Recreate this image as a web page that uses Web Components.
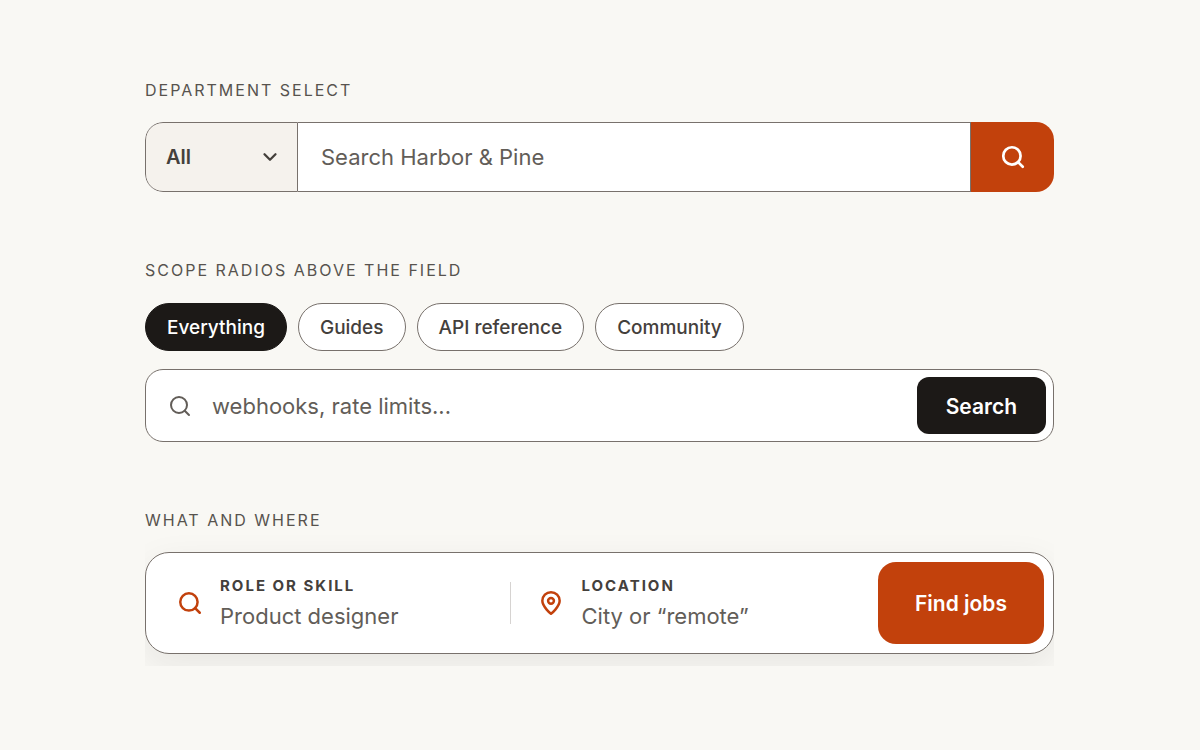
<!DOCTYPE html>
<html lang="en">
<head>
<meta charset="utf-8">
<meta name="viewport" content="width=device-width, initial-scale=1">
<title>Search fields</title>
<style>
  body {
    margin: 0;
    background: #f9f8f4;
    color: #44403c;
    font-family: Inter, "Liberation Sans", sans-serif;
    --line: #78716c;
    --muted: #57534e;
    --placeholder: #625d58;
    --ink: #1c1917;
    --accent: #c2410c;
  }
  main {
    display: grid;
    gap: 54px;
    padding: 78px 146px 78px 145px;
  }
</style>
</head>
<body>
<main>
  <search-section heading="DEPARTMENT SELECT">
    <department-search></department-search>
  </search-section>
  <search-section heading="SCOPE RADIOS ABOVE THE FIELD">
    <scope-search></scope-search>
  </search-section>
  <search-section heading="WHAT AND WHERE">
    <job-search>
      <job-field label="ROLE OR SKILL" placeholder="Product designer"><ui-icon name="search" slot="icon"></ui-icon></job-field>
      <job-field label="LOCATION" placeholder="City or “remote”"><ui-icon name="pin" slot="icon"></ui-icon></job-field>
    </job-search>
  </search-section>
</main>

<script>
  const reset = `
    *, *::before { box-sizing: border-box; }
    input, select, button { font: inherit; color: inherit; margin: 0; }
    input[type="search"], input[type="text"] {
      appearance: none; border: 0; outline: 0; background: none; padding: 0;
      min-width: 0; font-size: 22px; line-height: 28px; color: var(--ink);
    }
    input::placeholder { color: var(--placeholder); opacity: 1; }
    button { border: 0; cursor: pointer; }
  `;

  class BaseElement extends HTMLElement {
    connectedCallback() {
      if (this.shadowRoot) return;
      this.attachShadow({ mode: "open" }).innerHTML =
        `<style>${reset}${this.styles()}</style>${this.markup()}`;
    }
  }

  const icons = {
    search: '<circle cx="11" cy="11" r="8"/><path d="m21 21-4.300-4.300"/>',
    chevron: '<path d="m6 9 6 6 6-6"/>',
    pin: '<path d="M12 22s8-6.500 8-12a8 8 0 0 0-16 0c0 5.500 8 12 8 12z"/><circle cx="12" cy="10" r="2.700"/>'
  };

  customElements.define("ui-icon", class extends BaseElement {
    styles() {
      return `
        :host { display: block; flex: none; width: 26px; height: 26px; }
        svg { display: block; width: 100%; height: 100%; }
      `;
    }
    markup() {
      return `<svg viewBox="0 0 24 24" fill="none" stroke="currentColor" stroke-width="${this.getAttribute("stroke") || "2.3"}"
        stroke-linecap="round" stroke-linejoin="round" aria-hidden="true">${icons[this.getAttribute("name")]}</svg>`;
    }
  });

  customElements.define("search-section", class extends BaseElement {
    styles() {
      return `
        :host { display: block; overflow: hidden; padding-bottom: 12px; }
        h2 { margin: 0 0 20px; font-size: 16px; line-height: 24px; font-weight: 400;
             letter-spacing: 2px; color: var(--muted); }
      `;
    }
    markup() {
      return `<h2>${this.getAttribute("heading")}</h2><slot></slot>`;
    }
  });

  customElements.define("department-search", class extends BaseElement {
    styles() {
      return `
        :host { display: block; }
        form { display: flex; height: 70px; border-radius: 18px; background: #fff; overflow: hidden; }
        .department { display: grid; grid-template-columns: 1fr; align-items: center; width: 153px;
                      background: #f5f2ed; border: 1px solid var(--line); border-radius: 18px 0 0 18px; }
        select, .department ui-icon { grid-area: 1 / 1; }
        select { appearance: none; width: 100%; height: 100%; border: 0; outline: 0; background: none;
                 padding: 0 48px 0 20px; font-size: 20px; font-weight: 600; color: #44403c; }
        .department ui-icon { justify-self: end; width: 22px; height: 22px; margin-right: 16px;
                              pointer-events: none; }
        input[type="search"] { flex: 1; padding: 0 23px; border: 1px solid var(--line); border-left: 0; }
        button { display: grid; place-items: center; width: 83px;
                 background: var(--accent); color: #fff; padding: 0; }
      `;
    }
    markup() {
      return `<form>
        <div class="department">
          <select aria-label="Department"><option>All</option><option>Furniture</option><option>Lighting</option></select>
          <ui-icon name="chevron" stroke="2.5"></ui-icon>
        </div>
        <input type="search" aria-label="Search Harbor &amp; Pine" placeholder="Search Harbor &amp; Pine">
        <button type="button" aria-label="Search"><ui-icon name="search" stroke="2.5"></ui-icon></button>
      </form>`;
    }
  });

  customElements.define("scope-search", class extends BaseElement {
    styles() {
      return `
        :host { display: block; padding-top: 1px; }
        form { display: grid; gap: 18px; }
        fieldset { display: flex; flex-wrap: wrap; gap: 11px; margin: 0; padding: 0; border: 0; }
        label { display: grid; place-items: center; padding: 11px 21px 9px;
                border: 1px solid var(--line); border-radius: 24px; background: #fff;
                font-size: 19px; font-weight: 500; line-height: 26px; cursor: pointer; }
        label input { appearance: none; position: absolute; width: 1px; height: 1px; opacity: 0; }
        label:has(:checked) { background: var(--ink); border-color: var(--ink); color: #fff; }
        .bar { display: flex; align-items: center; gap: 20px; padding: 7px 7px 7px 22px;
               border: 1px solid var(--line); border-radius: 18px; background: #fff; }
        .bar > ui-icon { width: 24px; height: 24px; color: var(--placeholder); }
        .bar input { flex: 1; }
        button { height: 57px; padding: 1px 29px 0; border-radius: 12px; background: var(--ink);
                 color: #fff; font-size: 21px; font-weight: 600; }
      `;
    }
    markup() {
      const scopes = ["Everything", "Guides", "API reference", "Community"];
      return `<form>
        <fieldset aria-label="Scope">${scopes.map((s, i) =>
          `<label><input type="radio" name="scope" ${i ? "" : "checked"}><span>${s}</span></label>`).join("")}</fieldset>
        <div class="bar">
          <ui-icon name="search" stroke="2"></ui-icon>
          <input type="search" aria-label="Search the docs" placeholder="webhooks, rate limits...">
          <button type="button">Search</button>
        </div>
      </form>`;
    }
  });

  customElements.define("job-field", class extends BaseElement {
    styles() {
      return `
        :host { display: flex; align-items: center; gap: 17px; }
        ::slotted(ui-icon) { color: var(--accent); }
        div { display: grid; flex: 1; min-width: 0; padding-top: 2px; }
        label { font-size: 15px; line-height: 24px; font-weight: 700; letter-spacing: 2px; }
        input { width: 100%; height: 36px; }
      `;
    }
    markup() {
      return `<slot name="icon"></slot>
        <div><label for="field">${this.getAttribute("label")}</label>
        <input id="field" type="text" placeholder="${this.getAttribute("placeholder")}"></div>`;
    }
  });

  customElements.define("job-search", class extends BaseElement {
    styles() {
      return `
        :host { display: block; }
        form { display: flex; align-items: center; gap: 12px; padding: 9px; border: 1px solid var(--line);
               border-radius: 24px; background: #fff; box-shadow: 0 12px 36px rgba(28, 25, 23, .08); }
        .fields { display: grid; grid-template-columns: 1fr 1fr; flex: 1; align-items: center; }
        ::slotted(job-field) { padding-left: 22px; }
        ::slotted(job-field:last-child) { padding-left: 28px; background: linear-gradient(#d6d3d1, #d6d3d1) left / 1px 42px no-repeat; }
        button { height: 82px; padding: 1px 37px 0; border-radius: 18px; background: var(--accent);
                 color: #fff; font-size: 21px; font-weight: 600; }
      `;
    }
    markup() {
      return `<form><div class="fields"><slot></slot></div><button type="button">Find jobs</button></form>`;
    }
  });
</script>
</body>
</html>
